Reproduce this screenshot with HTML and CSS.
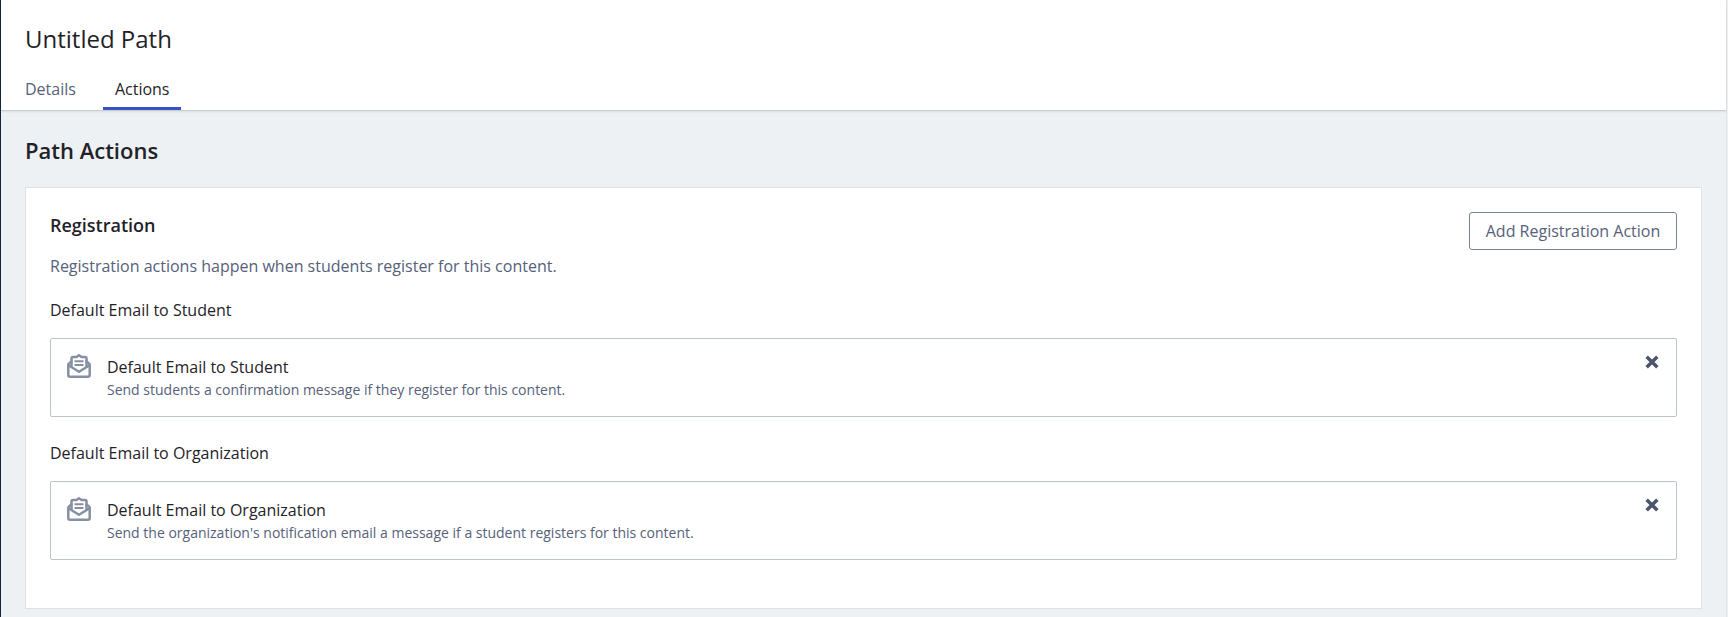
FILE: index.html
```html
<!DOCTYPE html>
<html lang="en">
<head>
<meta charset="utf-8">
<title>Untitled Path</title>
<link rel="stylesheet" href="styles.css">
</head>
<body>
<svg class="sprite" width="0" height="0" aria-hidden="true">
  <symbol id="mail" viewBox="0 0 24 24">
    <g fill="none" stroke="currentColor" stroke-width="2.500" stroke-linejoin="round" stroke-linecap="round">
      <path d="M4.500 12.500V4.500a1.500 1.500 0 0 1 1.500-1.500h3.500L12 1.300 14.500 3H18a1.500 1.500 0 0 1 1.500 1.500v8"/>
      <path d="M4.500 7.500 2.200 9.300a1.500 1.500 0 0 0-.9 1.300V21a1.700 1.700 0 0 0 1.700 1.700h18a1.700 1.700 0 0 0 1.700-1.700V10.600a1.500 1.500 0 0 0-.9-1.300L19.500 7.500"/>
      <path d="M1.800 11.500 12 17.800l10.200-6.300"/>
      <path d="M7.500 7.200h9M7.500 11h9" stroke-width="1.900" stroke-linecap="butt"/>
    </g>
  </symbol>
</svg>
<div class="app">
  <header class="top">
    <h1 class="title">Untitled Path</h1>
    <nav class="tabs">
      <a class="tab">Details</a>
      <a class="tab tab-active">Actions</a>
    </nav>
  </header>
  <main class="content">
    <h2 class="heading">Path Actions</h2>
    <section class="card">
      <div class="card-head">
        <div>
          <h3 class="card-title">Registration</h3>
          <p class="card-desc">Registration actions happen when students register for this content.</p>
        </div>
        <button class="btn" type="button">Add Registration Action</button>
      </div>
      <div class="group">
        <div class="group-label">Default Email to Student</div>
        <div class="item">
          <svg class="item-icon"><use href="#mail"/></svg>
          <div class="item-body">
            <div class="item-title">Default Email to Student</div>
            <div class="item-sub">Send students a confirmation message if they register for this content.</div>
          </div>
          <svg class="item-x" viewBox="0 0 12 12"><path d="M2 2l8 8M10 2l-8 8"/></svg>
        </div>
      </div>
      <div class="group">
        <div class="group-label">Default Email to Organization</div>
        <div class="item">
          <svg class="item-icon"><use href="#mail"/></svg>
          <div class="item-body">
            <div class="item-title">Default Email to Organization</div>
            <div class="item-sub">Send the organization's notification email a message if a student registers for this content.</div>
          </div>
          <svg class="item-x" viewBox="0 0 12 12"><path d="M2 2l8 8M10 2l-8 8"/></svg>
        </div>
      </div>
    </section>
  </main>
</div>
</body>
</html>
```
FILE: styles.css
```css
* { box-sizing: border-box; }
html, body { margin: 0; height: 100%; }
body {
  font-family: "Open Sans", sans-serif;
  background: #eef1f4;
  overflow: hidden;
}
.sprite { position: absolute; }
.app {
  height: 617px;
  border-left: 1px solid #14233f;
  border-right: 1px solid #e2e4e7;
  margin-right: 1px;
  background: #eef1f4;
}
.top {
  height: 111px;
  background: #fff;
  border-bottom: 1px solid #c9ccd1;
  padding: 0 0 0 24px;
  display: flex;
  flex-direction: column;
  box-shadow: 0 1px 2px rgba(0,0,0,.08);
}
.title {
  margin: 21px 0 0;
  font-size: 24px;
  line-height: 36px;
  font-weight: 400;
  color: #1f2328;
}
.tabs { display: flex; margin: 17px 0 0 -12px; }
.tab {
  height: 36px;
  padding: 0 12px;
  font-size: 16px;
  line-height: 30px;
  color: #56617a;
  border-bottom: 3px solid transparent;
  margin-right: 1px;
}
.tab-active { color: #1f2328; border-bottom-color: #3554c0; margin-left: 14px; }
.content { padding: 0 24px; }
.heading {
  margin: 23px 0 0;
  font-size: 22px;
  line-height: 32px;
  font-weight: 600;
  color: #1f2328;
}
.card {
  margin-top: 21px;
  height: 422px;
  background: #fff;
  border: 1px solid #dfe1e4;
  padding: 24px;
}
.card-head { display: flex; justify-content: space-between; align-items: flex-start; }
.card-title {
  margin: 0;
  font-size: 18px;
  line-height: 26px;
  font-weight: 600;
  color: #1f2328;
}
.card-desc {
  margin: 16px 0 0;
  font-size: 16px;
  line-height: 24px;
  color: #56617a;
}
.btn {
  width: 208px;
  height: 38px;
  padding: 0;
  font: 400 16px/24px "Open Sans", sans-serif;
  color: #56617a;
  background: #fff;
  border: 1px solid #7a8499;
  border-radius: 3px;
}
.group-label {
  font-size: 16px;
  line-height: 24px;
  color: #1f2328;
}
.card-head + .group { margin-top: 20px; }
.group + .group { margin-top: 24px; }
.item {
  margin-top: 16px;
  height: 79px;
  border: 1px solid #bcc3cf;
  border-radius: 2px;
  padding: 15px 16px 0 16px;
  display: flex;
  align-items: flex-start;
}
.item-icon { width: 24px; height: 24px; color: #878fa3; flex: none; }
.item-body { flex: 1; margin-left: 16px; margin-top: 1px; }
.item-title { font-size: 16px; line-height: 24px; color: #1f2328; }
.item-sub { font-size: 14px; line-height: 20px; color: #56617a; margin-top: 1px; }
.item-x {
  width: 16px;
  height: 16px;
  flex: none;
  margin-top: 0;
  fill: none;
  stroke: #4c556b;
  stroke-width: 2.6;
}
```
